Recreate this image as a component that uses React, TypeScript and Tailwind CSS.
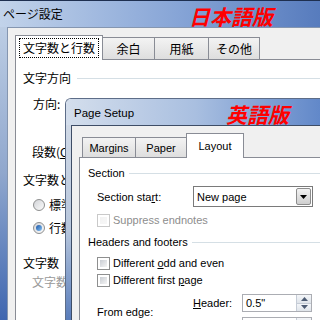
const jp = "font-['Noto_Sans_CJK_JP','Liberation_Sans',sans-serif]";
const en = "font-['Liberation_Sans','Noto_Sans_CJK_JP',sans-serif]";

const Radio = ({ checked }: { checked?: boolean }) => (
  <span className="w-[12px] h-[12px] shrink-0 rounded-full border border-[#8e8f8f] bg-gradient-to-br from-[#d2d4d8] to-[#fbfbfb] flex items-center justify-center">
    {checked && <span className="w-[6px] h-[6px] rounded-full bg-gradient-to-br from-[#1c55a6] to-[#86c4f4]" />}
  </span>
);

const Check = ({ disabled }: { disabled?: boolean }) => (
  <span
    className={`w-[13px] h-[13px] shrink-0 border bg-white p-[2px] ${
      disabled ? "border-[#c9c9c9]" : "border-[#8e8f8f]"
    }`}
  >
    <span
      className={`block w-full h-full bg-gradient-to-br ${
        disabled ? "from-[#f2f2f2] to-[#f7f7f7]" : "from-[#c9cdd3] to-[#f5f5f5]"
      }`}
    />
  </span>
);

const GroupHead = ({ label, gap }: { label: string; gap: string }) => (
  <div className="flex items-center">
    <span>{label}</span>
    <span className={`flex-1 h-px bg-[#d5dfe5] ${gap}`} />
  </div>
);

const Spin = () => (
  <span className="w-[15px] h-[16px] flex flex-col border-l border-[#c5ccd6]">
    <span className="flex-1 bg-gradient-to-b from-[#f4f6f9] to-[#dfe4ea] flex items-center justify-center border-b border-[#c5ccd6]">
      <svg width="7" height="4" viewBox="0 0 7 4">
        <path d="M3.5 0L7 4H0z" fill="#4d5b73" />
      </svg>
    </span>
    <span className="flex-1 bg-gradient-to-b from-[#f4f6f9] to-[#dfe4ea] flex items-center justify-center">
      <svg width="7" height="4" viewBox="0 0 7 4">
        <path d="M0 0h7L3.5 4z" fill="#4d5b73" />
      </svg>
    </span>
  </span>
);

const SpinBox = ({ value }: { value: string }) => (
  <div className="w-[70px] h-[18px] border border-[#abadb3] bg-white flex items-center pl-[3px]">
    <span className="flex-1">{value}</span>
    <Spin />
  </div>
);

export default function App() {
  return (
    <div className={`relative w-[320px] h-[320px] overflow-hidden bg-[#f0f0f0] text-black ${jp}`}>
      {/* Japanese dialog */}
      <div className="flex flex-col w-[360px] h-[320px]">
        <div className="h-[27px] shrink-0 border-t border-[#1e2f50] bg-gradient-to-r from-[#c2d3ea] via-[#86a4d6] to-[#4a70b6] flex items-center pl-[3px] text-[12px] leading-[16px]">
          ページ設定
        </div>
        <div className="flex flex-1">
          <div className="w-[7px] bg-gradient-to-b from-[#bccde4] via-[#90a7cd] to-[#3f66b0]" />
          <div className="flex-1 flex flex-col border-l border-t border-[#8596b0] pt-[7px] pl-[7px] text-[12px] leading-[16px]">
            <div className="flex items-end h-[24px]">
              <div className="relative z-10 -mb-px w-[88px] h-[25px] bg-white border border-b-0 border-[#898c95] flex items-center justify-center">
                <span className="border border-dotted border-black px-[3px] py-[1px]">文字数と行数</span>
              </div>
              <div className="-ml-px w-[53px] h-[22px] border border-b-0 border-[#898c95] bg-gradient-to-b from-[#f3f3f3] to-[#dedede] flex items-center justify-center">
                余白
              </div>
              <div className="-ml-px w-[55px] h-[22px] border border-b-0 border-[#898c95] bg-gradient-to-b from-[#f3f3f3] to-[#dedede] flex items-center justify-center">
                用紙
              </div>
              <div className="-ml-px w-[52px] h-[22px] border border-b-0 border-[#898c95] bg-gradient-to-b from-[#f3f3f3] to-[#dedede] flex items-center justify-center">
                その他
              </div>
            </div>
            <div className="flex-1 bg-white border-l border-t border-[#898c95] pt-[10px] pl-[7px] flex flex-col">
              <GroupHead label="文字方向" gap="ml-[6px]" />
              <div className="mt-[10px] pl-[10px] flex items-center">
                <span className="w-[66px]">方向:</span>
                <Radio checked />
                <span className="ml-[4px]">横書き(Z)</span>
              </div>
              <div className="mt-[32px] pl-[9px] flex items-center">
                <span>
                  段数(<span className="underline">C</span>):
                </span>
              </div>
              <div className="mt-[12px]">
                <GroupHead label="文字数と行数の指定" gap="ml-[6px]" />
              </div>
              <div className="mt-[9px] pl-[10px] flex items-center">
                <Radio />
                <span className="ml-[4px]">標準の文字数を使う(N)</span>
              </div>
              <div className="mt-[7px] pl-[10px] flex items-center">
                <Radio checked />
                <span className="ml-[4px]">行数だけを指定する(O)</span>
              </div>
              <div className="mt-[19px]">文字数</div>
              <div className="mt-[3px] pl-[9px] text-[#9a9a9a]">文字数(E):</div>
            </div>
          </div>
        </div>
      </div>

      {/* English dialog */}
      <div className={`absolute left-[65px] top-[98px] w-[260px] h-[230px] flex flex-col rounded-tl-[6px] overflow-hidden border-l border-t border-[#5d6d88] ${en}`}>
        <div className="h-[26px] shrink-0 bg-gradient-to-r from-[#d4deec] via-[#a9bfe0] to-[#5f86c8] flex items-center pl-[8px] pt-[3px] text-[11.5px]">
          Page Setup
        </div>
        <div className="flex flex-1">
          <div className="w-[5px] bg-gradient-to-b from-[#d0d9e6] via-[#b7c6dc] to-[#4a70b4]" />
          <div className="flex-1 flex flex-col bg-[#f0f0f0] border-l border-t border-[#3e4d66] pt-[7px] pl-[7px] text-[11px] leading-[14px]">
            <div className="flex items-end h-[24px] pl-[3px]">
              <div className="w-[54px] h-[20px] border border-b-0 border-[#898c95] bg-gradient-to-b from-[#f3f3f3] to-[#dedede] flex items-center justify-center">
                Margins
              </div>
              <div className="-ml-px w-[52px] h-[20px] border border-b-0 border-[#898c95] bg-gradient-to-b from-[#f3f3f3] to-[#dedede] flex items-center justify-center">
                Paper
              </div>
              <div className="relative z-10 -ml-px -mb-px w-[58px] h-[25px] bg-white border border-b-0 border-[#898c95] flex items-center justify-center">
                Layout
              </div>
            </div>
            <div className="flex-1 bg-white border-l border-t border-[#898c95] pt-[8px] pl-[8px] flex flex-col">
              <GroupHead label="Section" gap="ml-[4px]" />
              <div className="mt-[6px] pl-[9px] flex items-center">
                <span className="w-[96px]">
                  Section sta<span className="underline">r</span>t:
                </span>
                <div className="w-[120px] h-[21px] border border-[#7a7a7a] bg-white flex items-center pl-[3px] pr-[1px]">
                  <span className="flex-1">New page</span>
                  <span className="w-[15px] h-[17px] border border-[#8d8d8d] rounded-[2px] bg-gradient-to-b from-[#f3f3f3] to-[#cfcfcf] flex items-center justify-center">
                    <svg width="7" height="4" viewBox="0 0 7 4">
                      <path d="M0 0h7L3.5 4z" fill="#000" />
                    </svg>
                  </span>
                </div>
              </div>
              <div className="mt-[6px] pl-[9px] flex items-center text-[#8d8d8d]">
                <Check disabled />
                <span className="ml-[3px]">Suppress endnotes</span>
              </div>
              <div className="mt-[8px]">
                <GroupHead label="Headers and footers" gap="ml-[4px]" />
              </div>
              <div className="mt-[7px] pl-[9px] flex items-center">
                <Check />
                <span className="ml-[3px]">
                  Different <span className="underline">o</span>dd and even
                </span>
              </div>
              <div className="mt-[3px] pl-[9px] flex items-center">
                <Check />
                <span className="ml-[3px]">
                  Different first <span className="underline">p</span>age
                </span>
              </div>
              <div className="mt-[7px] pl-[9px] flex">
                <span className="w-[96px] self-start mt-[11px]">From edge:</span>
                <div className="flex flex-col gap-[5px]">
                  <div className="flex items-center">
                    <span className="w-[49px]">
                      <span className="underline">H</span>eader:
                    </span>
                    <SpinBox value={'0.5"'} />
                  </div>
                  <div className="flex items-center">
                    <span className="w-[49px]">
                      <span className="underline">F</span>ooter:
                    </span>
                    <SpinBox value={'0.5"'} />
                  </div>
                </div>
              </div>
            </div>
          </div>
        </div>
      </div>

      {/* red captions */}
      <span className="absolute left-[189px] top-[3px] text-[21px] leading-[26px] font-bold italic text-[#ff0000]">
        日本語版
      </span>
      <span className="absolute left-[226px] top-[101px] text-[21px] leading-[26px] font-bold italic text-[#ff0000]">
        英語版
      </span>
    </div>
  );
}
